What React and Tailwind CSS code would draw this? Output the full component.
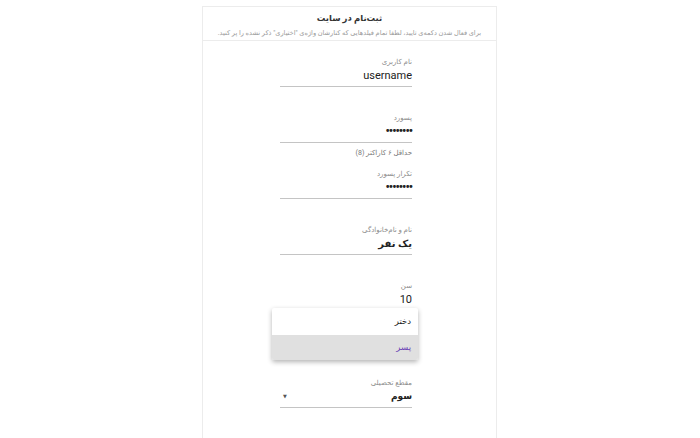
import React from "react";

const fontStack = { fontFamily: 'Roboto, "DejaVu Sans", sans-serif' };

function Field({ label, value, helper, mono, bold }) {
  return (
    <div className="h-[56px]" dir="rtl">
      <div className="border-b border-[#c4c4c4] pb-[2px]">
        <div className="text-[7px] leading-[10px] text-[#8a8a8a]">{label}</div>
        <div
          className={`h-[17px] leading-[17px] text-[#222] ${
            mono
              ? "text-[12px] tracking-[-1px] font-bold"
              : bold
              ? "text-[10px] font-bold"
              : "text-[11px]"
          }`}
        >
          {value}
        </div>
      </div>
      {helper && (
        <div className="mt-[5px] text-[7px] leading-[10px] text-[#777]">{helper}</div>
      )}
    </div>
  );
}

export default function App() {
  return (
    <div className="min-h-screen bg-white flex justify-center pt-[6px]" style={fontStack}>
      <div className="w-[295px] h-[440px] border border-[#ececec] border-b-0 ml-[-1px]">
        {/* header */}
        <div className="h-[34px] border-b border-[#ececec] flex flex-col items-center" dir="rtl">
          <div className="mt-[5px] text-[8.5px] leading-[12px] font-bold text-[#333]">
            ثبت‌نام در سایت
          </div>
          <div className="mt-[4px] text-[6.6px] leading-[11px] text-[#9a9a9a] whitespace-nowrap">
            برای فعال شدن دکمه‌ی تایید، لطفا تمام فیلدهایی که کنارشان واژه‌ی "اختیاری" ذکر نشده را پر کنید.
          </div>
        </div>

        {/* form */}
        <div className="pl-[77px] pr-[84px] pt-[16px]">
          <Field label="نام کاربری" value="username" />
          <Field label="پسورد" value="••••••••" mono helper="حداقل ۶ کاراکتر (8)" />
          <Field label="تکرار پسورد" value="••••••••" mono />
          <Field label="نام و نام‌خانوادگی" value="یک نفر" bold />

          {/* age + gender select with open menu */}
          <div className="relative h-[97px]" dir="rtl">
            <div className="text-[7px] leading-[10px] text-[#8a8a8a]">سن</div>
            <div className="h-[17px] leading-[17px] text-[11px] text-[#222]">10</div>
            <div className="absolute top-[27px] left-[-8px] w-[146px] bg-white rounded-[2px] shadow-[0_2px_5px_rgba(0,0,0,0.3)] overflow-hidden">
              <div className="h-[27px] flex items-center pr-[7px] text-[8.5px] text-[#222]">دختر</div>
              <div className="h-[25px] flex items-center pr-[7px] text-[8.5px] text-[#6a3fb5] bg-[#e0e0e0]">پسر</div>
            </div>
          </div>

          {/* education */}
          <div dir="rtl">
            <div className="border-b border-[#c4c4c4] pb-[2px]">
              <div className="text-[7px] leading-[10px] text-[#8a8a8a]">مقطع تحصیلی</div>
              <div className="h-[17px] flex items-center justify-between text-[#222]">
                <span className="text-[9px] font-bold">سوم</span>
                <span className="text-[5px] ml-[3px] text-[#555]">▼</span>
              </div>
            </div>
          </div>
        </div>
      </div>
    </div>
  );
}
